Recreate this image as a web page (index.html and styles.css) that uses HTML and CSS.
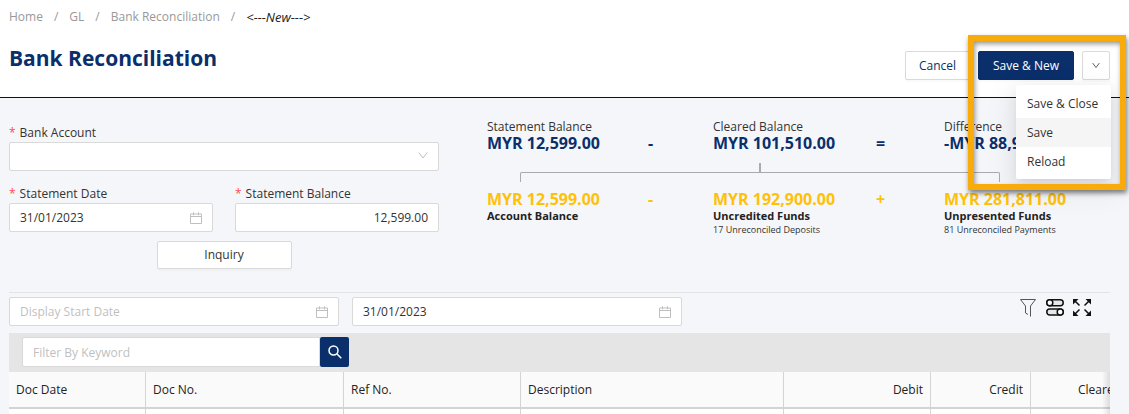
FILE: index.html
```html
<!DOCTYPE html>
<html lang="en">
<head>
<meta charset="utf-8">
<meta name="viewport" content="width=device-width, initial-scale=1">
<title>Bank Reconciliation</title>
<link rel="stylesheet" href="styles.css">
</head>
<body>
<svg class="defs" aria-hidden="true">
  <symbol id="calendar" viewBox="0 0 12 12"><path d="M.5 2h11v9.500H.5zM.5 4.500h11M3.500 .3v3M8.500 .3v3"/></symbol>
  <symbol id="chevron" viewBox="0 0 10 8"><path d="M.8 1 5 6.500 9.200 1"/></symbol>
</svg>

<header class="page-header">
  <nav class="breadcrumb" aria-label="Breadcrumb">
    <a href="#">Home</a><span>/</span><a href="#">GL</a><span>/</span><a href="#">Bank Reconciliation</a><span>/</span><em>&lt;---New---&gt;</em>
  </nav>
  <div class="title-row">
    <h1>Bank Reconciliation</h1>
    <div class="actions">
      <button class="btn cancel" type="button">Cancel</button>
      <button class="btn primary" type="button">Save &amp; New</button>
      <div class="more">
        <button class="btn toggle" type="button" aria-label="More save options" aria-expanded="true"><svg class="chevron"><use href="#chevron"/></svg></button>
        <div class="menu">
          <button type="button">Save &amp; Close</button>
          <button type="button" class="active">Save</button>
          <button type="button">Reload</button>
        </div>
        <div class="highlight"></div>
      </div>
    </div>
  </div>
</header>

<main>
  <section class="overview">
    <form class="account-form">
      <div class="field">
        <label for="account">Bank Account</label>
        <div class="control"><select id="account"><option></option></select><svg class="chevron"><use href="#chevron"/></svg></div>
      </div>
      <div class="field-pair">
        <div class="field">
          <label for="date">Statement Date</label>
          <div class="control"><input id="date" type="text" value="31/01/2023"><svg class="calendar"><use href="#calendar"/></svg></div>
        </div>
        <div class="field">
          <label for="balance">Statement Balance</label>
          <div class="control"><input id="balance" class="amount-input" type="text" value="12,599.00"></div>
        </div>
      </div>
      <button class="btn inquiry" type="button">Inquiry</button>
    </form>

    <div class="summary">
      <div class="totals">
        <div class="figure"><span>Statement Balance</span><strong>MYR 12,599.00</strong></div>
        <b class="operator">-</b>
        <div class="figure"><span>Cleared Balance</span><strong>MYR 101,510.00</strong></div>
        <b class="operator">=</b>
        <div class="figure"><span>Difference</span><strong>-MYR 88,911.00</strong></div>
      </div>
      <div class="bracket"><i class="tick"></i><div class="arms"><i class="arm-left"></i><i class="arm-right"></i></div></div>
      <div class="totals breakdown">
        <div class="figure"><strong>MYR 12,599.00</strong><b>Account Balance</b></div>
        <b class="operator">-</b>
        <div class="figure"><strong>MYR 192,900.00</strong><b>Uncredited Funds</b><small>17 Unreconciled Deposits</small></div>
        <b class="operator">+</b>
        <div class="figure"><strong>MYR 281,811.00</strong><b>Unpresented Funds</b><small>81 Unreconciled Payments</small></div>
      </div>
    </div>
  </section>

  <section class="transactions">
    <div class="range">
      <div class="control"><input type="text" placeholder="Display Start Date" aria-label="Display start date"><svg class="calendar"><use href="#calendar"/></svg></div>
      <div class="control"><input type="text" value="31/01/2023" aria-label="Display end date"><svg class="calendar"><use href="#calendar"/></svg></div>
      <div class="tools">
        <button type="button" aria-label="Filter"><svg viewBox="0 0 20 20"><path class="funnel" d="M2.500 2.500h15L12.500 9V19.500M2.500 2.500 7.500 9v7l2.500 1.500"/></svg></button>
        <button type="button" aria-label="Columns"><svg viewBox="0 0 20 20"><g class="switches"><rect x="1.800" y="2.800" width="16.400" height="6" rx="3"/><circle cx="4.800" cy="5.800" r="3"/><rect x="1.800" y="12" width="16.400" height="6" rx="3"/><circle cx="15.200" cy="15" r="3"/></g></svg></button>
        <button type="button" aria-label="Full screen"><svg viewBox="0 0 20 20"><path class="expand" d="M2.500 3.500 7.500 8.500M17.500 3.500l-5 5M2.500 17.500l5-5M17.500 17.500l-5-5"/><path class="tips" d="M1 2h5.500L1 7.500zM19 2v5.500L13.500 2zM1 19v-5.500L6.500 19zM19 19h-5.500L19 13.500z"/></svg></button>
      </div>
    </div>
    <div class="search">
      <input type="text" placeholder="Filter By Keyword" aria-label="Filter by keyword"><button type="button" aria-label="Search"><svg viewBox="0 0 14 14"><circle cx="5.500" cy="5.500" r="4.500"/><path d="m9 9 4.300 4.300"/></svg></button>
    </div>
    <div class="grid">
      <table>
        <colgroup><col class="c-date"><col class="c-doc"><col class="c-ref"><col class="c-desc"><col class="c-debit"><col class="c-credit"><col class="c-cleared"></colgroup>
        <thead><tr><th>Doc Date</th><th>Doc No.</th><th>Ref No.</th><th>Description</th><th class="num">Debit</th><th class="num">Credit</th><th class="num">Cleared</th></tr></thead>
        <tbody><tr><td></td><td></td><td></td><td></td><td></td><td></td><td></td></tr></tbody>
      </table>
    </div>
  </section>
</main>
</body>
</html>
```
FILE: styles.css
```css
* { box-sizing: border-box; }

body {
  margin: 0;
  background: #f5f6fa;
  color: #333;
  font: 12px/18px "Open Sans", "Noto Sans", sans-serif;
}

button, input, select { font: inherit; color: inherit; }
button { cursor: pointer; }
h1 { margin: 0; }
svg { display: block; fill: none; stroke: currentColor; }
.defs { position: absolute; width: 0; height: 0; }

.page-header {
  background: #fff;
  border-bottom: 1px solid #0b1226;
  padding: 8px 19px 17px 9px;
}

.breadcrumb { display: flex; gap: 11px; color: #999; }
.breadcrumb a { color: inherit; text-decoration: none; }
.breadcrumb em { color: #222; font-size: 13px; }

.page-header { padding-bottom: 13px; }
.title-row { display: flex; justify-content: space-between; align-items: flex-end; height: 58px; }
.title-row h1 { align-self: center; padding-top: 6px; font-size: 21px; line-height: 30px; color: #0a2f6b; }
.actions { display: flex; gap: 8px; }

.btn {
  height: 29px;
  padding: 0 13px;
  border: 1px solid #d9d9d9;
  border-radius: 2px;
  background: #fff;
  box-shadow: 0 2px 0 rgba(0, 0, 0, .02);
}
.cancel { color: #0a2f6b; width: 65px; }
.primary { background: #0a2f6b; border-color: #0a2f6b; color: #fff; width: 96px; padding: 0; }
.more { position: relative; }
.toggle { width: 28px; padding: 0 9px; }
.toggle .chevron { width: 8px; height: 7px; color: #333; }

.menu {
  position: absolute;
  z-index: 1;
  top: 34px;
  right: -1px;
  width: 95px;
  padding: 4px 0 3px;
  background: #fff;
  border-radius: 2px;
  box-shadow: 0 3px 6px -4px rgba(0, 0, 0, .12), 0 6px 16px rgba(0, 0, 0, .08), 0 9px 28px 8px rgba(0, 0, 0, .05);
}
.menu button { display: block; width: 100%; height: 29px; padding: 0 11px; border: 0; background: none; text-align: left; }
.menu .active { background: #f5f5f5; }

.highlight {
  position: absolute;
  z-index: 2;
  top: -16px;
  right: -16px;
  width: 158px;
  height: 155px;
  border: 6px solid #faab0c;
  box-shadow: 1px 3px 5px rgba(0, 0, 0, .5), inset 1px 3px 5px rgba(0, 0, 0, .4);
  pointer-events: none;
}

main { padding: 0 19px 0 9px; }

.overview { display: grid; grid-template-columns: 430fr 623fr; gap: 48px; padding: 21px 0 23px; }

.account-form { display: flex; flex-direction: column; gap: 14px; padding-top: 5px; }
.field label { display: block; }
.field label::before { content: "*"; color: #ff4d4f; margin-right: 4px; }
.field-pair { display: flex; gap: 22px; }
.field-pair .field { flex: 1; }
.control { position: relative; }
.control input, .control select {
  display: block;
  width: 100%;
  height: 29px;
  padding: 0 10px;
  border: 1px solid #d9d9d9;
  border-radius: 2px;
  background: #fff;
  appearance: none;
}
.control .amount-input { text-align: right; }
.control svg { position: absolute; top: 9px; right: 11px; color: #bfbfbf; pointer-events: none; }
.chevron { width: 10px; height: 9px; }
.calendar { width: 12px; height: 12px; }
input::placeholder { color: #bfbfbf; opacity: 1; }
.inquiry { width: 135px; height: 28px; align-self: center; margin-top: -5px; }

.totals { display: grid; grid-template-columns: 161fr 65fr 163fr 68fr 166fr; white-space: nowrap; }
.figure { display: flex; flex-direction: column; min-width: 0; }
.figure span { line-height: 15px; }
.figure strong, .operator { font-size: 16px; line-height: 19px; color: #0a2f6b; }
.operator { align-self: end; }
.figure b { color: #222; line-height: 14px; font-size: 11px; }
.figure small { font-size: 9px; line-height: 14px; }
.breakdown strong, .breakdown .operator { color: #ffc107; }
.breakdown .operator { align-self: start; }

.bracket { width: 77%; margin-left: 33px; padding-top: 10px; }
.tick { display: block; width: 2px; height: 9px; margin: 0 auto; background: #aaa; }
.arms { display: flex; height: 18px; }
.arm-left, .arm-right { flex: 1; height: 10px; border-top: 1px solid #aaa; }
.arm-left { border-left: 1px solid #aaa; border-top-left-radius: 2px; }
.arm-right { border-right: 1px solid #aaa; border-top-right-radius: 2px; }

.transactions { border-top: 1px solid #e2e3e7; }
.range { display: flex; gap: 13px; padding: 4px 0 7px; }
.range .control { flex: 0 1 330px; }
.tools { display: flex; gap: 7px; margin-left: auto; padding-right: 18px; }
.tools button { width: 20px; height: 20px; padding: 0; border: 0; background: none; color: #111; }
.tools svg { width: 20px; height: 20px; }
.funnel { stroke: #555; }
.switches { stroke-width: 1.5; }
.switches rect { fill: #e8e8e8; }
.switches circle { fill: #fff; }
.expand { stroke-width: 1.5; }
.tips { fill: currentColor; stroke: none; }

.search { display: flex; height: 39px; padding: 4px 13px; background: #e5e5e5; }
.search input { width: 298px; height: 30px; padding: 0 10px; border: 1px solid #d9d9d9; border-radius: 2px 0 0 2px; background: #fff; }
.search button { display: grid; place-items: center; width: 29px; height: 30px; padding: 0; border: 0; border-radius: 2px; background: #0a2f6b; color: #fff; }
.search svg { width: 14px; height: 14px; stroke-width: 1.5; }

.grid { position: relative; overflow: hidden; background: #fff; }
.grid::after { content: ""; position: absolute; inset: 0 0 0 auto; width: 8px; background: linear-gradient(to right, transparent, rgba(0, 0, 0, .12)); }
table { width: 1120px; table-layout: fixed; border-collapse: separate; border-spacing: 0; }
th { height: 37px; padding: 0 7px; text-align: left; font-weight: 400; color: #222; background: #fafafa; border-right: 1px solid #d4d4d4; border-bottom: 2px solid #d4d4d4; }
td { height: 5px; padding: 0; border-right: 1px solid #d4d4d4; }
.num { text-align: right; }
.c-date { width: 137px; }
.c-doc { width: 198px; }
.c-ref { width: 177px; }
.c-desc { width: 263px; }
.c-debit { width: 147px; }
.c-credit { width: 100px; }
.c-cleared { width: 98px; }
```
